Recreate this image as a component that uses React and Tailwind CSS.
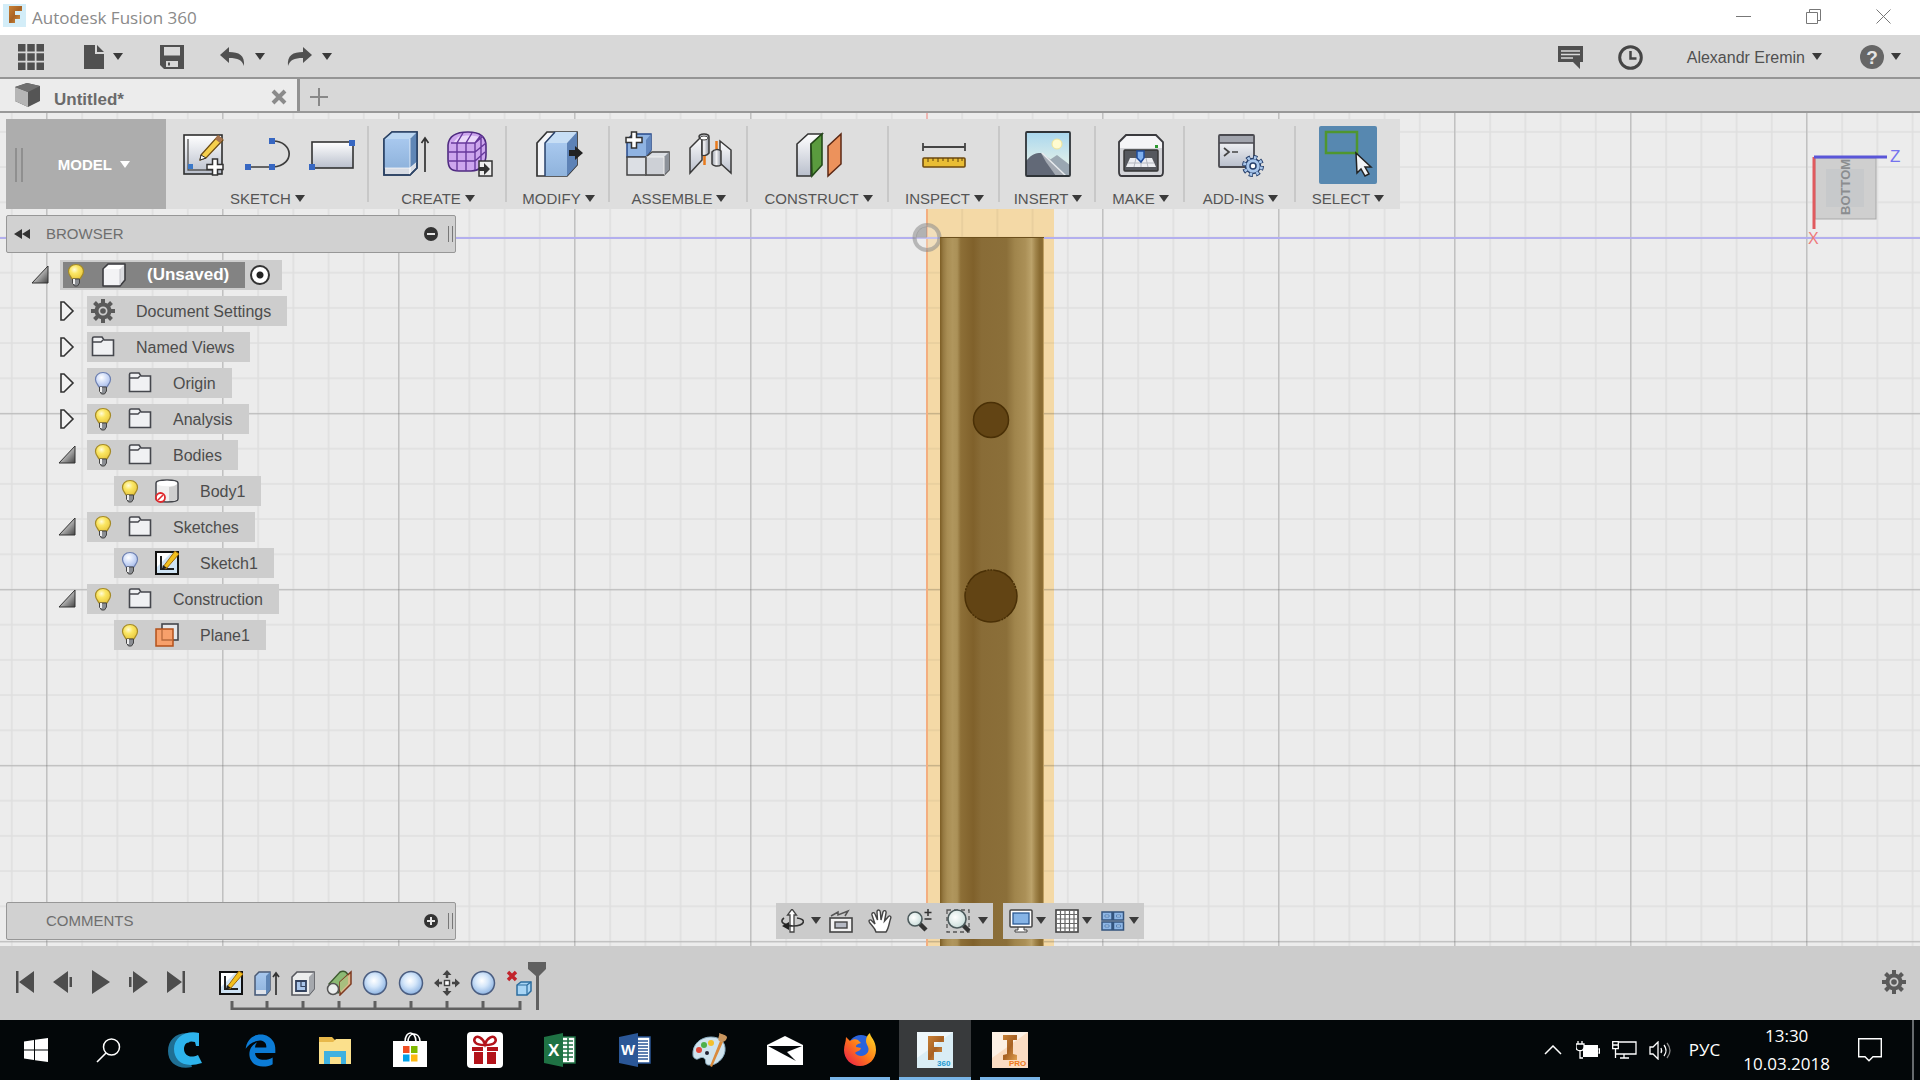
import React, { useState } from 'react'
import { FaEdgeLegacy } from 'react-icons/fa6'

const sans = "font-['Liberation_Sans',Arial,sans-serif]"

const Svg = ({ w = 24, h = w, box, className = "", children }) => (
  <svg width={w} height={h} viewBox={box || `0 0 ${w} ${h}`} fill="none" aria-hidden="true" className={`shrink-0 ${className}`}>
    {children}
  </svg>
)

const Caret = ({ className = "text-[#3a3a3a]" }) => (
  <Svg w={10} h={8} className={className}><path d="M0 0h10L5 7z" fill="currentColor" /></Svg>
)

// Gradients shared by all the icons
const Defs = () => (
  <svg width="0" height="0" className="absolute" aria-hidden="true">
    <defs>
      <linearGradient id="steel" x1="0" y1="0" x2="0" y2="1"><stop stopColor="#fff" /><stop offset="1" stopColor="#b9bfcc" /></linearGradient>
      <linearGradient id="blue" x1="0" y1="0" x2="0" y2="1"><stop stopColor="#a8c8ee" /><stop offset="1" stopColor="#8fb3dc" /></linearGradient>
      <linearGradient id="sky" x1="0" y1="0" x2="0" y2="1"><stop stopColor="#a9d7ee" /><stop offset="1" stopColor="#f4f8e8" /></linearGradient>
      <linearGradient id="metal" x1="0" y1="0" x2="1" y2="0"><stop stopColor="#9aa0aa" /><stop offset="0.5" stopColor="#f2f2f4" /><stop offset="1" stopColor="#8d939e" /></linearGradient>
      <radialGradient id="ball" cx="0.45" cy="0.4" r="0.6"><stop stopColor="#fff" /><stop offset="0.45" stopColor="#d5e7fa" /><stop offset="1" stopColor="#8eb4e2" /></radialGradient>
      <radialGradient id="bulbOn" cx="0.4" cy="0.35" r="0.7"><stop stopColor="#fffbd8" /><stop offset="0.4" stopColor="#fbe765" /><stop offset="1" stopColor="#e8c63c" /></radialGradient>
      <radialGradient id="bulbOff" cx="0.4" cy="0.35" r="0.7"><stop stopColor="#fff" /><stop offset="0.5" stopColor="#d2def8" /><stop offset="1" stopColor="#a9bdea" /></radialGradient>
      <radialGradient id="lens" cx="0.4" cy="0.4" r="0.7"><stop stopColor="#fff" /><stop offset="1" stopColor="#c3d9d6" /></radialGradient>
      <linearGradient id="corner" x1="0" y1="0" x2="1" y2="1"><stop offset="0.3" stopColor="#ddd" /><stop offset="1" stopColor="#444" /></linearGradient>
      <linearGradient id="bronze" x1="0" y1="0" x2="1" y2="1"><stop stopColor="#c98136" /><stop offset="0.5" stopColor="#a86224" /><stop offset="1" stopColor="#e0a050" /></linearGradient>
      <linearGradient id="fire" x1="0" y1="1" x2="1" y2="0"><stop stopColor="#e8124e" /><stop offset="0.5" stopColor="#ff7a1a" /><stop offset="1" stopColor="#ffe226" /></linearGradient>
    </defs>
  </svg>
)

/* ---------- ribbon icons, 48 x 48 ---------- */

const Plus = ({ x, y }) => (
  <path transform={`translate(${x} ${y})`} d="M-2.500-8h5v5.500h5.500v5h-5.500v5.500h-5v-5.500h-5.500v-5h5.500z" fill="#fff" stroke="#333" strokeWidth="1.500" />
)

const CreateSketchIcon = () => (
  <Svg w={48}>
    <rect x="4" y="4" width="38" height="39" fill="url(#steel)" stroke="#2e2e2e" strokeWidth="1.600" />
    <path d="M8 8v31h30" stroke="#555" strokeWidth="1.300" />
    <rect x="8" y="33" width="5" height="5" fill="#3a78c8" />
    <path d="M21 24l17-19 5 4-17 18-6 2z" fill="#f5cf4c" stroke="#6b4a12" strokeWidth="1.200" />
    <path d="M35 8l3-4 5 4-3 4z" fill="#a8744e" />
    <path d="M21 24l5 3-6 2z" fill="#fff" stroke="#333" />
    <Plus x={35} y={36} />
  </Svg>
)

const ArcIcon = () => (
  <Svg w={48}>
    <path d="M4 36h25c23-2 20-26 0-26" stroke="#3d3d3d" strokeWidth="1.700" />
    <path d="M1 33h6v6H1zM25 33h6v6h-6zM25 7h6v6h-6z" fill="#3767c2" />
  </Svg>
)

const RectangleIcon = () => (
  <Svg w={48}>
    <rect x="4" y="11" width="41" height="26" fill="url(#steel)" stroke="#333" strokeWidth="1.600" />
    <path d="M1 33h6v6H1zM41 9h6v6h-6z" fill="#3767c2" />
  </Svg>
)

const ExtrudeIcon = () => (
  <Svg w={48}>
    <path d="M2 8l8-7h25v36l-7 7H2z" fill="#d8dce4" stroke="#27364e" strokeWidth="1.600" />
    <path d="M2 8h26v29H2z" fill="url(#blue)" />
    <path d="M2 8l8-7h25l-7 7z" fill="#bcd7f2" />
    <path d="M28 8l7-7v30l-7 6z" fill="#5f86b6" />
    <path d="M2 37h26v7M28 8v36M28 37l7-6" stroke="#fff" strokeOpacity=".7" />
    <path d="M2 8l8-7h25v36l-7 7H2z" stroke="#2b4468" strokeWidth="1.600" />
    <path d="M43 41V8M39.500 12L43 7l3.500 5" stroke="#333" strokeWidth="1.700" />
  </Svg>
)

const FormIcon = () => (
  <Svg w={48}>
    <path d="M2 14C3 4 11 1 22 1s18 4 18 14v9c0 9-6 16-15 16H13C4 40 2 36 2 28z" fill="#cda6ee" stroke="#4f2b80" strokeWidth="1.600" />
    <path d="M12 6c7-2 15-2 21 0l-5 6H7z" fill="#ead7fa" />
    <path d="M2 21h27l11-9M2 30h27l10-9M5 12h24l8-7M11 40V12l6-10M20 40V12l6-10M29 39V12l6-8M35 36V7" stroke="#67399c" strokeWidth="1.400" />
    <rect x="33" y="30" width="13" height="15" fill="#eee" stroke="#333" strokeWidth="1.500" />
    <path d="M33 36h5v-4l6 6-6 6v-4h-5z" fill="#333" />
  </Svg>
)

const PressPullIcon = () => (
  <Svg w={48}>
    <path d="M2 12L12 1h30v33L32 45H2z" fill="#f4f5f8" stroke="#333" strokeWidth="1.700" />
    <path d="M10 12h22v33H10z" fill="url(#blue)" />
    <path d="M10 12L20 1h22L32 12z" fill="#c7def5" />
    <path d="M32 12L42 1v33L32 45z" fill="#5d82b6" />
    <path d="M10 45V12L20 1" stroke="#27406a" strokeWidth="1.500" />
    <path d="M34 19h6v-4l8 7-8 7v-4h-6z" fill="#222" />
  </Svg>
)

const AssembleIcon = () => (
  <Svg w={48}>
    <path d="M4 9l6-6h18v16l-5 7H4z" fill="#8fb3e2" stroke="#274a8a" strokeWidth="1.500" />
    <path d="M23 9l5-6v16l-5 7z" fill="#6286bd" />
    <path d="M4 26h19v18H4zM23 26l6-5h17v18l-5 5H23z" fill="#dcdfe4" stroke="#444" strokeWidth="1.500" />
    <path d="M41 26l5-5v18l-5 5z" fill="#8c9199" />
    <path d="M23 26h18v18H23z" fill="#cdd0d6" stroke="#eee" />
    <path d="M23 26v18h18" stroke="#444" strokeWidth="1.500" />
    <Plus x={11} y={9} />
  </Svg>
)

const JointIcon = () => (
  <Svg w={48}>
    <path d="M3 17l12-12v24L3 42z" fill="url(#steel)" stroke="#3a3a3a" strokeWidth="1.500" />
    <path d="M12 6c0-4 10-4 10 0v16c-2 3-6 3-7 2V9z" fill="url(#metal)" stroke="#3a3a3a" strokeWidth="1.500" />
    <ellipse cx="17" cy="7" rx="4" ry="2" fill="#fff" stroke="#444" />
    <path d="M17.500 25v9M29.500 10v11" stroke="#e87a1c" strokeWidth="2.500" />
    <path d="M33 10l11 9v23L33 32z" fill="url(#steel)" stroke="#3a3a3a" strokeWidth="1.500" />
    <path d="M25 21c2-3 7-3 9-1v14c-3 2-8 1-9-1z" fill="url(#metal)" stroke="#3a3a3a" strokeWidth="1.500" />
  </Svg>
)

const ConstructIcon = () => (
  <Svg w={48}>
    <path d="M2 13L13 3h14L16 13v32H2z" fill="url(#steel)" stroke="#333" strokeWidth="1.600" />
    <path d="M16 13L27 3v31L17 45z" fill="#5a9a3e" stroke="#244a18" strokeWidth="1.600" />
    <path d="M33 15L46 3v30L33 45z" fill="#ec925c" stroke="#5c2814" strokeWidth="1.500" />
  </Svg>
)

const InspectIcon = () => (
  <Svg w={48}>
    <path d="M2 16h42M2 12v8M44 12v8" stroke="#444" strokeWidth="1.800" />
    <rect x="2" y="27" width="42" height="9" rx="1" fill="#e9bd35" stroke="#6e4a10" strokeWidth="1.600" />
    <path d="M7 27v4M12 27v3M17 27v4M22 27v3M27 27v4M32 27v3M37 27v4M41 27v3" stroke="#5e400e" />
  </Svg>
)

const InsertIcon = () => (
  <Svg w={48}>
    <rect x="2" y="1" width="44" height="44" fill="url(#sky)" />
    <circle cx="33" cy="13" r="5" fill="#fffbd0" stroke="#eee59a" />
    <path d="M24 30l9-6 13 10v11H24z" fill="#9aa7b2" />
    <path d="M2 30c6-7 9-8 15-8l23 23H2z" fill="#626977" />
    <path d="M17 22l9 6 15 17H32L22 31z" fill="#a3a9b2" />
    <path d="M18 22l24 23" stroke="#e8ebee" strokeWidth="1.500" />
    <rect x="2" y="1" width="44" height="44" rx="1" stroke="#2f3438" strokeWidth="1.800" />
  </Svg>
)

const MakeIcon = () => (
  <Svg w={48}>
    <path d="M2 11l7-7h30l7 7v30c0 3-1 4-3 4H5c-2 0-3-1-3-4z" fill="#d3d4d8" stroke="#3a3a3e" strokeWidth="1.800" />
    <path d="M3 12l7-7h28l7 7v5H3z" fill="#f5f5f7" />
    <rect x="38" y="14" width="3" height="3" fill="#2d9a30" />
    <rect x="7" y="19" width="34" height="21" rx="1" fill="#55585e" stroke="#333" strokeWidth="1.400" />
    <path d="M13 27h22l4 9H9z" fill="#eceef2" />
    <path d="M11 32h26M19 27l-2 9M24 27v9M29 27l2 9" stroke="#b4b8c0" />
    <path d="M20 20h7v7l-3 4-4-4z" fill="#7fb0ee" stroke="#1f4c9c" strokeWidth="1.500" />
  </Svg>
)

const AddInsIcon = () => (
  <Svg w={48}>
    <rect x="2" y="4" width="35" height="32" rx="1" fill="url(#steel)" stroke="#4a4a50" strokeWidth="1.800" />
    <path d="M3 5h33v7H3z" fill="#a2a5ae" />
    <path d="M2 12h35" stroke="#4a4a50" strokeWidth="1.500" />
    <path d="M7 17l5 4-5 4M15 21h6" stroke="#444" strokeWidth="1.700" />
    <circle cx="36" cy="35" r="9" stroke="#27406c" strokeWidth="4" strokeDasharray="4 3.070" />
    <circle cx="36" cy="35" r="7.500" fill="#a9c7ec" stroke="#27406c" strokeWidth="1.500" />
    <circle cx="36" cy="35" r="8.500" stroke="#a9c7ec" strokeWidth="3" strokeDasharray="2.500 4.180" strokeDashoffset="-0.700" />
    <circle cx="36" cy="35" r="3" fill="#fff" stroke="#27406c" strokeWidth="1.500" />
  </Svg>
)

const SelectIcon = () => (
  <Svg w={58}>
    <rect x="7" y="6" width="31" height="21" stroke="#4f962f" strokeWidth="2.500" />
    <path d="M37 27l1 20 4-4 4 7 4-2-4-7h6z" fill="#f2f4f6" stroke="#222" strokeWidth="1.500" />
  </Svg>
)

/* ---------- small icons ---------- */

const Bulb = ({ on }) => (
  <Svg w={24}>
    <path d="M12 1.500c5 0 7.500 3.500 7.500 7 0 3-2 4.500-3.500 7.500H8c-1.500-3-3.500-4.500-3.500-7.500 0-3.500 2.500-7 7.500-7z" fill={on ? "url(#bulbOn)" : "url(#bulbOff)"} stroke={on ? "#a48a28" : "#6c7fb0"} strokeWidth="1.200" />
    <path d="M8.500 16h7v4l-2 3h-3l-2-3z" fill="#8a8d92" stroke="#444" />
    <path d="M10 16v5" stroke="#eee" strokeWidth="2" />
  </Svg>
)

const Folder = () => (
  <Svg w={24}>
    <path d="M1.500 3.500c0-1 .5-1.500 1.500-1.500h8l2 3h9.500v15.500h-21z" fill="#f0f1f3" stroke="#45474d" strokeWidth="1.600" />
    <path d="M2 7h8l2-2" stroke="#45474d" strokeWidth="1.400" />
  </Svg>
)

const Gear = () => (
  <Svg w={24}>
    <circle cx="12" cy="12" r="6.500" stroke="#5a5a5a" strokeWidth="4" />
    <path d="M12 0v4M12 20v4M0 12h4M20 12h4M3.500 3.500l3 3M17.500 17.500l3 3M3.500 20.500l3-3M17.500 6.500l3-3" stroke="#5a5a5a" strokeWidth="4" />
    <circle cx="12" cy="12" r="2.800" fill="#5a5a5a" />
  </Svg>
)

const Cube = () => (
  <Svg w={24}>
    <path d="M1 6l5-5h17v16l-5 6H1z" fill="#dcdde1" stroke="#3c3c40" strokeWidth="1.600" strokeLinejoin="round" />
    <path d="M2 6h16v16H2z" fill="#f3f3f5" />
    <path d="M2 6l5-4h15l-4 4z" fill="#fff" />
    <path d="M18 6v16" stroke="#c4c4ca" />
  </Svg>
)

const Cylinder = () => (
  <Svg w={24}>
    <path d="M1 4c0-4 22-4 22 0v16c0 4-22 4-22 0z" fill="#f0f0f0" stroke="#44464c" strokeWidth="1.500" />
    <path d="M14 8c5-1 6-1 8-3v15c-2 2-5 2-8 2z" fill="#cfcfcf" />
    <ellipse cx="12" cy="4.500" rx="10" ry="2.800" fill="#fff" />
    <circle cx="5.500" cy="18.500" r="4.500" fill="#fff" stroke="#e0282c" strokeWidth="1.800" />
    <path d="M3 21l5-5" stroke="#e0282c" strokeWidth="1.600" />
  </Svg>
)

const SketchIcon = () => (
  <Svg w={24}>
    <rect x="1" y="1" width="22" height="22" fill="#cfe3f4" stroke="#111" strokeWidth="2" />
    <path d="M2 2h14L2 16z" fill="#fff" />
    <path d="M6 5v13h13" stroke="#222" strokeWidth="2" />
    <path d="M8 16L20 0l4 3L11 18z" fill="#f3c01d" stroke="#a06a0c" />
    <path d="M7 18l1-4 4 3z" fill="#222" />
  </Svg>
)

const PlaneIcon = () => (
  <Svg w={24}>
    <rect x="7" y="1" width="16" height="16" fill="#e6e7ea" stroke="#44464c" strokeWidth="1.600" />
    <rect x="1" y="6" width="17" height="17" fill="#f7a06b" stroke="#b3501a" strokeWidth="1.500" />
    <path d="M7 7v10h10" stroke="#b86a3c" strokeWidth="1.300" />
  </Svg>
)

const Extrude = () => (
  <Svg w={26} h={26}>
    <path d="M1 6l4-4h11v18l-4 5H1z" fill="url(#blue)" stroke="#4a5a74" strokeWidth="1.500" />
    <path d="M12 6l4-4v18l-4 5z" fill="#5f86b6" />
    <path d="M2 20h10v4H2z" fill="#dfe3ea" />
    <path d="M22 25V4M19 7l3-4 3 4" stroke="#333" strokeWidth="1.700" />
  </Svg>
)

const Shell = () => (
  <Svg w={26}>
    <path d="M2 7l5-5h17v17l-5 6H2z" fill="#eceded" stroke="#55575d" strokeWidth="1.600" />
    <path d="M19 7l5-5v17l-5 6z" fill="#a5a8ad" />
    <path d="M6 11h10v10H6z" fill="#aac6ea" stroke="#33425e" strokeWidth="1.800" />
    <path d="M11 12v4.500h4" stroke="#33425e" strokeWidth="1.200" />
  </Svg>
)

const Split = () => (
  <Svg w={26}>
    <path d="M3 14L14 2c4-2 8 0 8 5L12 23z" fill="#8cba74" stroke="#3d5a30" strokeWidth="1.400" />
    <path d="M14 12L25 2v12L14 25z" fill="#dcb88a" stroke="#7e3a20" strokeWidth="1.500" />
    <path d="M14 12L22 5v9L14 22z" fill="#a8bf7e" />
    <circle cx="7" cy="19" r="5.500" fill="#eceeee" stroke="#555" strokeWidth="1.500" />
  </Svg>
)

const Ball = () => (
  <Svg w={26}>
    <circle cx="13" cy="13" r="11.500" fill="url(#ball)" stroke="#4a5d80" strokeWidth="1.500" />
  </Svg>
)

const Move = () => (
  <Svg w={26}>
    <path d="M13 0l4.500 5h-9zM13 26l4.500-5h-9zM0 13l5-4.500v9zM26 13l-5-4.500v9z" fill="#444" />
    <path d="M13 4v4M13 18v4M4 13h4M18 13h4" stroke="#444" strokeWidth="2.500" />
    <rect x="10.500" y="10.500" width="5" height="5" fill="#fff" stroke="#444" strokeWidth="1.400" />
  </Svg>
)

const Remove = () => (
  <Svg w={26}>
    <path d="M2 2l8 8M10 2l-8 8" stroke="#c2242c" strokeWidth="3.400" />
    <path d="M11 15l4-3h10v9l-4 4H11z" fill="#a8d5f5" stroke="#2b6c9e" strokeWidth="1.500" />
    <path d="M11 15h10v10M21 15l4-3" stroke="#2b6c9e" strokeWidth="1.200" />
  </Svg>
)

/* ---------- window header ---------- */

const TitleBar = () => (
  <header className="flex h-[35px] items-center justify-between bg-white pl-[3px]">
    <div className="flex items-center gap-1.5 pb-1">
      <Svg w={23}>
        <path d="M0 0h23v23H0z" fill="#d3edf8" />
        <path d="M6 2h13v5h-7v4h5v4h-5v4H6z" fill="url(#bronze)" />
      </Svg>
      <h1 className="pt-1 font-['Open_Sans','Noto_Sans',sans-serif] text-[17px] leading-6 text-[#8a8a8a]">Autodesk Fusion 360</h1>
    </div>
    <div className="flex pb-0.5 pr-0.5">
      {[["Minimize", "M0 7.500h15"], ["Restore", "M.5 3.500h11v11H.5zM3.500 3.500v-3h11v11h-3"], ["Close", "M.5.5l14 14M14.500.5l-14 14"]].map(([label, d]) => (
        <button key={label} aria-label={label} className="flex h-8 w-[70px] items-center justify-center">
          <Svg w={15}><path d={d} stroke="#777" /></Svg>
        </button>
      ))}
    </div>
  </header>
)

const TopBar = () => (
  <div className={`flex h-[44px] items-center justify-between border-b-2 border-[#959595] bg-[#d8d8d8] pl-[18px] pr-[19px] pt-0.5 ${sans}`}>
    <div className="flex items-center">
      <button aria-label="Data panel">
        <Svg w={26}><path d="M0 0h7.500v7.500H0zM9.250 0h7.500v7.500h-7.500zM18.500 0H26v7.500h-7.500zM0 9.250h7.500v7.500H0zM9.250 9.250h7.500v7.500h-7.500zM18.500 9.250H26v7.500h-7.500zM0 18.500h7.500V26H0zM9.250 18.500h7.500V26h-7.500zM18.500 18.500H26V26h-7.500z" fill="#505050" /></Svg>
      </button>
      <button aria-label="File" className="ml-10 flex items-center gap-[9px]">
        <Svg w={20} h={24}><path d="M0 0h11v9h9v15H0zM13 0l7 7h-7z" fill="#505050" /></Svg>
        <Caret />
      </button>
      <button aria-label="Save" className="ml-[37px]">
        <Svg w={24}><path d="M0 0h24v24H4l-4-4zM4 2v8.500h16V2zM6 16v6h12v-6zM8 17.500h2v3H8z" fillRule="evenodd" fill="#505050" /></Svg>
      </button>
      <button aria-label="Undo" className="ml-9 flex items-center gap-2.5">
        <Svg w={25} h={20}><path d="M0 8l9-8v5c10 0 16 3 15 14-2-6-6-8-15-8v5z" fill="#505050" /></Svg>
        <Caret />
      </button>
      <button aria-label="Redo" className="ml-[22px] flex items-center gap-2.5">
        <Svg w={25} h={20}><path d="M25 8l-9-8v5C6 5 0 8 1 19c2-6 6-8 15-8v5z" fill="#505050" /></Svg>
        <Caret />
      </button>
    </div>
    <div className="flex items-center">
      <button aria-label="Notifications">
        <Svg w={25} h={23}><path d="M0 0h25v16h-3v7l-7-7H0z" fill="#505050" /><path d="M3 5h19M3 8.500h19M3 12h12" stroke="#d8d8d8" strokeWidth="1.300" /></Svg>
      </button>
      <button aria-label="Job status" className="ml-[35px]">
        <Svg w={25}><circle cx="12.500" cy="12.500" r="10.800" stroke="#454545" strokeWidth="3" /><path d="M12.500 6v7.500h6" stroke="#454545" strokeWidth="2.500" /></Svg>
      </button>
      <button className="ml-11 flex items-center gap-[7px] text-[16px] leading-5 text-[#505050]">
        <span className="pt-0.5">Alexandr Eremin</span> <Caret />
      </button>
      <button aria-label="Help" className="ml-[38px] flex items-center gap-[7px]">
        <span className="flex size-6 items-center justify-center rounded-full bg-[#666] text-[19px] font-bold leading-none text-[#e4e4e4]">?</span>
        <Caret />
      </button>
    </div>
  </div>
)

const TabBar = () => (
  <div className={`flex h-[34px] border-b-2 border-[#999] bg-[#d8d8d8] ${sans}`}>
    <div className="flex w-[300px] items-center border-r-3 border-[#929292] bg-[#ececec] pl-[15px] pr-[10px]">
      <Svg w={25} h={24}>
        <path d="M0 4l12-4 13 3v15l-12 6L0 18z" fill="#555" />
        <path d="M0 4l13 5v15L0 18z" fill="#b5b5b5" />
        <path d="M0 4l12-4 13 3-12 6z" fill="#707070" />
      </Svg>
      <span className="ml-3.5 flex-1 pt-2.5 text-[17px] font-bold leading-5 text-[#6a6a6a]">Untitled*</span>
      <button aria-label="Close tab" className="pt-1"><Svg w={16}><path d="M2 2l12 12M14 2L2 14" stroke="#8b8b8b" strokeWidth="4" /></Svg></button>
    </div>
    <button aria-label="New tab" className="ml-2.5 pt-1"><Svg w={18}><path d="M9 0v18M0 9h18" stroke="#888" strokeWidth="2" /></Svg></button>
  </div>
)

/* ---------- ribbon ---------- */

const groups = [
  { label: "SKETCH", width: "w-[203px]", icons: [CreateSketchIcon, ArcIcon, RectangleIcon] },
  { label: "CREATE", width: "w-[138px]", icons: [ExtrudeIcon, FormIcon] },
  { label: "MODIFY", width: "w-[103px]", icons: [PressPullIcon] },
  { label: "ASSEMBLE", width: "w-[138px]", icons: [AssembleIcon, JointIcon] },
  { label: "CONSTRUCT", width: "w-[141px]", icons: [ConstructIcon] },
  { label: "INSPECT", width: "w-[111px]", icons: [InspectIcon] },
  { label: "INSERT", width: "w-[96px]", icons: [InsertIcon] },
  { label: "MAKE", width: "w-[89px]", icons: [MakeIcon] },
  { label: "ADD-INS", width: "w-[111px]", icons: [AddInsIcon] },
  { label: "SELECT", width: "w-[104px]", icons: [SelectIcon], active: true },
]

const Ribbon = () => (
  <div className="flex h-[90px] w-fit bg-[#dedede]">
    <button className="relative flex w-[160px] items-center justify-end gap-2 bg-[#adadad] pr-9 pt-0.5 text-[15px] font-bold text-white">
      <span className="absolute left-[9px] h-[34px] w-2 border-x-2 border-[#8f8f8f]" />
      MODEL <Caret className="text-white" />
    </button>
    {groups.map((g) => (
      <div key={g.label} className={`relative flex flex-col items-center pt-[7px] ${g.width}`}>
        <div className="flex h-[58px] items-center gap-4">
          {g.icons.map((Icon, i) => (
            <button key={i} aria-label={`${g.label} ${i + 1}`} className={g.active ? "rounded-xs bg-[#5788b0]" : ""}><Icon /></button>
          ))}
        </div>
        <button className="mt-[5px] flex items-center gap-1 text-[15px] leading-5 text-[#555]">
          {g.label} <Caret />
        </button>
        {!g.active && <span className="absolute right-0 top-[7px] h-[76px] w-0.5 bg-[#c8c8c8]" />}
      </div>
    ))}
  </div>
)

/* ---------- browser tree ---------- */

const items = [
  { name: "Document Settings", level: 1, icon: Gear, open: false },
  { name: "Named Views", level: 1, icon: Folder, open: false },
  { name: "Origin", level: 1, icon: Folder, open: false, bulb: "off" },
  { name: "Analysis", level: 1, icon: Folder, open: false, bulb: "on" },
  { name: "Bodies", level: 1, icon: Folder, open: true, bulb: "on" },
  { name: "Body1", level: 2, icon: Cylinder, bulb: "on" },
  { name: "Sketches", level: 1, icon: Folder, open: true, bulb: "on" },
  { name: "Sketch1", level: 2, icon: SketchIcon, bulb: "off" },
  { name: "Construction", level: 1, icon: Folder, open: true, bulb: "on" },
  { name: "Plane1", level: 2, icon: PlaneIcon, bulb: "on" },
]

const Arrow = ({ open }) => (
  <Svg w={18} h={20}>
    {open ? <path d="M17 1v17H1z" fill="url(#corner)" stroke="#333" /> : <path d="M3 1h3l9 9-9 9H3z" fill="#f2f2f2" stroke="#333" strokeWidth="1.600" />}
  </Svg>
)

const PanelHeader = ({ title, open, onToggle }) => (
  <div className="flex h-[38px] w-[450px] items-center rounded-xs border border-[#979797] bg-[#d1d1d1] pl-[7px] pr-0.5 text-[15px] text-[#6e6e6e]">
    <span className="w-8">
      {open && <Svg w={16} h={10}><path d="M8 0v10L0 5zM16 0v10L8 5z" fill="#333" /></Svg>}
    </span>
    <h2 className="flex-1">{title}</h2>
    <button aria-label={`Toggle ${title}`} onClick={onToggle}>
      <Svg w={14}><circle cx="7" cy="7" r="7" fill="#333" /><path d={open ? "M3 7h8" : "M3 7h8M7 3v8"} stroke="#e6e6e6" strokeWidth="2" /></Svg>
    </button>
    <span className="ml-2.5 h-4 w-[5px] border-x border-[#777]" />
  </div>
)

const Browser = () => {
  const [open, setOpen] = useState(true)

  return (
    <section className="mt-1.5 w-fit">
      <PanelHeader title="BROWSER" open={open} onToggle={() => setOpen(!open)} />
      {open && (
        <ul className="mt-[7px] space-y-1.5 text-[16px] text-[#4c4c4c]">
          <li className="flex items-center pl-[25px]">
            <button aria-label="Collapse"><Arrow open /></button>
            <div className="ml-[11px] flex h-[30px] items-center bg-[#cdcdcd] pl-[3px]">
              <div className="flex h-[26px] items-center bg-[#838383] pl-px pr-4 text-[17px] font-bold text-white">
                <Bulb on />
                <span className="ml-3.5 mr-[21px]"><Cube /></span>
                (Unsaved)
              </div>
              <label className="flex w-[37px] pl-[5px]">
                <input type="radio" defaultChecked aria-label="Activate component" className="size-5 appearance-none rounded-full border-2 border-[#333] bg-[radial-gradient(circle,#222_3px,#fff_4px)]" />
              </label>
            </div>
          </li>
          {items.map(({ name, level, icon: Icon, open, bulb }) => (
            <li key={name} className={`flex h-[30px] items-center ${level === 2 ? "pl-[108px]" : "pl-[52px]"}`}>
              {level === 1 && <button aria-label={`Expand ${name}`} className="mr-[11px]"><Arrow open={open} /></button>}
              <div className="flex h-[30px] items-center bg-[#cdcdcd] pl-1 pr-4">
                {bulb && <span className="mr-[13px]"><Bulb on={bulb === "on"} /></span>}
                <span className="mr-[21px]"><Icon /></span>
                <span className="pt-0.5">{name}</span>
              </div>
            </li>
          ))}
        </ul>
      )}
    </section>
  )
}

/* ---------- canvas ---------- */

const Scene = () => (
  <svg className="absolute inset-0 size-full" aria-hidden="true">
    <defs>
      <pattern id="minor" x="46" y="123.500" width="35.200" height="35.200" patternUnits="userSpaceOnUse">
        <path d="M0 1h35.200M1 0v35.200" stroke="#000" strokeOpacity=".055" strokeWidth="1.600" />
      </pattern>
      <pattern id="major" x="46" y="124" width="176" height="176" patternUnits="userSpaceOnUse">
        <path d="M0 .5h176M.5 0v176" stroke="#000" strokeOpacity=".14" />
        <path d="M0 1.500h176M1.500 0v176" stroke="#000" strokeOpacity=".06" />
      </pattern>
      <linearGradient id="tube">
        <stop stopColor="#7c5d24" />
        <stop offset=".03" stopColor="#957941" />
        <stop offset=".07" stopColor="#a88d53" />
        <stop offset=".12" stopColor="#b0965d" />
        <stop offset=".165" stopColor="#ab9158" />
        <stop offset=".2" stopColor="#8d6f37" />
        <stop offset=".32" stopColor="#80612b" />
        <stop offset=".4" stopColor="#896c37" />
        <stop offset=".64" stopColor="#8b6f39" />
        <stop offset=".72" stopColor="#a0854c" />
        <stop offset=".82" stopColor="#ab9057" />
        <stop offset=".88" stopColor="#bca36b" />
        <stop offset=".92" stopColor="#a0844a" />
        <stop offset=".96" stopColor="#8a6c32" />
        <stop offset=".985" stopColor="#8a6c32" />
        <stop offset="1" stopColor="#d8b777" />
      </linearGradient>
    </defs>
    <rect x="927" y="50" width="127" height="100%" fill="#f4d9a6" />
    <rect width="100%" height="100%" fill="url(#minor)" />
    <rect width="100%" height="100%" fill="url(#major)" />
    <path d="M927 0v50" stroke="#eeb6b2" strokeWidth="2" />
    <path d="M927 50v2000" stroke="#f3ae80" strokeWidth="2" />
    <rect y="124" width="100%" height="2" fill="#b3afee" />
    <circle cx="927" cy="124.500" r="12.500" stroke="#8a8a8a" strokeOpacity=".55" strokeWidth="4" fill="#eee" fillOpacity=".3" />
    <path d="M927 124.500v-11a11 11 0 0 0-11 11z" fill="#8a8a8a" fillOpacity=".6" />
    <rect x="940" y="124" width="104" height="100%" fill="url(#tube)" />
    <path d="M940 124.500h104" stroke="#6d501c" />
    <circle cx="991" cy="307" r="17.500" fill="#624414" stroke="#4a3006" strokeWidth="1.500" />
    <circle cx="991" cy="483" r="26" fill="#624414" stroke="#4a3006" strokeWidth="1.500" strokeDasharray="24 1 2 1 2 1" />
  </svg>
)

const ViewCube = () => (
  <Svg w={100} h={110} className={`absolute right-[14px] top-[30px] ${sans}`}>
    <rect x="9" y="15" width="61" height="61" fill="#cfcfcf" stroke="#a9a9a9" />
    <rect x="20" y="26" width="38" height="38" fill="#c7c9cb" />
    <text x="44" y="72" transform="rotate(-90 44 72)" fontSize="13" fontWeight="bold" fill="#8b8d90">BOTTOM</text>
    <path d="M8 14v72" stroke="#e05a5e" strokeWidth="3" />
    <path d="M8 14h73" stroke="#5a56d8" strokeWidth="3" />
    <text x="84" y="19" fontSize="17" fill="#7573ee">Z</text>
    <text x="2" y="101" fontSize="16" fill="#ee7a7c">X</text>
  </Svg>
)

const NavBar = () => (
  <nav className="flex items-center gap-2.5">
    <div className="flex h-9 items-center bg-[#cbcbcb] pl-1 pr-[5px]">
      <button aria-label="Orbit" className="flex items-center gap-[7px]">
        <Svg w={24}>
          <path d="M10 23V6H7.500L12 0l4.500 6H14v17z" fill="#fff" stroke="#444" strokeWidth="1.300" />
          <path d="M4 9c-6 4 2 8 9 8 12 0 14-7 4-8" stroke="#333" strokeWidth="1.600" />
          <path d="M9 13v8l-7-4z" fill="#222" />
        </Svg>
        <Caret />
      </button>
      <button aria-label="Look at" className="ml-2">
        <Svg w={24}>
          <rect x="1" y="9" width="22" height="14" fill="#f2f2f2" stroke="#444" strokeWidth="1.600" />
          <rect x="6" y="13" width="12" height="6" fill="#b6bac4" stroke="#444" strokeWidth="1.400" />
          <path d="M2 7l7-4v3l10-4-3 5" stroke="#555" strokeWidth="1.500" />
        </Svg>
      </button>
      <button aria-label="Pan" className="ml-[15px]">
        <Svg w={24}>
          <path d="M8 23c-1-4-4-6-6.500-9.500C0 11 2.500 10 4 12l3 3L4 6c-.6-2.500 2.300-3.200 3-1l2.500 6L9 3c0-2.700 3-2.700 3.300 0l.7 8 2-8c.7-2.300 3.500-1.500 3 1l-1.500 8L20 8c1-2 3.500-1 2.700 1.200C21 14 21 19 18 23z" fill="#fff" stroke="#444" strokeWidth="1.400" />
        </Svg>
      </button>
      <button aria-label="Zoom" className="ml-[15px]">
        <Svg w={25} h={24}>
          <path d="M13 15l6 6" stroke="#333" strokeWidth="4.500" />
          <circle cx="8" cy="10" r="7" fill="url(#lens)" stroke="#4c5a5c" strokeWidth="1.600" />
          <path d="M21 0v7M17.500 3.500h7M17.500 10h7" stroke="#333" strokeWidth="1.500" />
        </Svg>
      </button>
      <button aria-label="Fit" className="ml-[14px] flex items-center gap-[7px]">
        <Svg w={25} h={24}>
          <rect x="1" y="1" width="22" height="22" stroke="#555" strokeWidth="1.300" strokeDasharray="4 3" />
          <path d="M17 16l6 6" stroke="#333" strokeWidth="4.500" />
          <circle cx="11" cy="10" r="9" fill="url(#lens)" stroke="#4c5a5c" strokeWidth="1.600" />
        </Svg>
        <Caret />
      </button>
    </div>
    <div className="flex h-9 items-center gap-[9px] bg-[#cbcbcb] pl-1.5 pr-[5px]">
      <button aria-label="Display settings" className="flex items-center gap-[3px]">
        <Svg w={24}>
          <path d="M9 17h6v4h3v2H6v-2h3z" fill="#fff" stroke="#444" />
          <rect x="1" y="1" width="22" height="17" rx="1" fill="#fff" stroke="#444" strokeWidth="1.500" />
          <rect x="4" y="4" width="16" height="11" fill="#86b4e6" stroke="#2c5a94" strokeWidth="1.300" />
        </Svg>
        <Caret />
      </button>
      <button aria-label="Grid and snaps" className="flex items-center gap-[3px]">
        <Svg w={24}>
          <rect x="1" y="1" width="22" height="22" fill="#fff" stroke="#444" strokeWidth="1.600" />
          <path d="M5.500 1v22M10 1v22M14.500 1v22M19 1v22M1 5.500h22M1 10h22M1 14.500h22M1 19h22" stroke="#666" strokeWidth="1.200" />
        </Svg>
        <Caret />
      </button>
      <button aria-label="Viewports" className="flex items-center gap-1">
        <Svg w={24}>
          <path d="M1 3h10v8H1zM12.500 3h10v8h-10zM1 13h10v8H1zM12.500 13h10v8h-10z" fill="#8db6e6" stroke="#34547e" strokeWidth="1.500" />
          <path d="M4 6h4v2H4zM15.500 6h4v2h-4zM4 16h4v2H4zM15.500 16h4v2h-4z" fill="#c4dcf6" stroke="#5b83b4" />
        </Svg>
        <Caret />
      </button>
    </div>
  </nav>
)

/* ---------- timeline ---------- */

const controls = [
  ["Go to start", "M1 1h2.500v22H1zM19 1v22L4 12z"],
  ["Step back", "M15 1v22L0 12zM16.500 7H19v10h-2.500z"],
  ["Play", "M1 0l18 12L1 24z"],
  ["Step forward", "M0 7h2.500v10H0zM4 1l15 11L4 23z"],
  ["Go to end", "M0 1l15 11L0 23zM15.500 1H18v22h-2.500z"],
]

const features = [SketchIcon, Extrude, Shell, Split, Ball, Ball, Move, Ball, Remove]

const Timeline = () => (
  <section className="flex h-[74px] items-start justify-between bg-[#ccc] pl-[15px] pr-[14px]">
    <div className="flex items-start">
      <div className="mt-6 flex gap-[17px]">
        {controls.map(([label, d]) => (
          <button key={label} aria-label={label}><Svg w={21} h={24}><path d={d} fill="#4d4d4d" /></Svg></button>
        ))}
      </div>
      <div className="ml-[25px] mt-6">
        <ul className="flex">
          {features.map((Icon, i) => (
            <li key={i}><button aria-label={`Feature ${i + 1}`} className="flex h-[26px] w-9 items-center justify-center"><Icon /></button></li>
          ))}
        </ul>
        <Svg w={324} h={14}>
          <path d="M19 5v8h288V5M54 5v8M90 5v8M126 5v8M162 5v8M198 5v8M234 5v8M270 5v8" stroke="#606060" strokeWidth="3" />
        </Svg>
      </div>
      <button aria-label="History marker" className="-ml-[9px] mt-4">
        <Svg w={18} h={48}><path d="M0 0h18v7l-7 7v34H8V14L0 7z" fill="#606060" /></Svg>
      </button>
    </div>
    <button aria-label="Settings" className="mt-6"><Gear /></button>
  </section>
)

/* ---------- windows taskbar ---------- */

const Excel = () => (
  <Svg w={32} h={34}>
    <path d="M17 4h14v26H17z" fill="#fff" stroke="#1f7244" strokeWidth="1.500" />
    <path d="M19 8h10M19 12h10M19 16h10M19 20h10M19 24h10M24 5v23" stroke="#1f7244" strokeWidth="1.600" />
    <path d="M0 4l19-4v34L0 30z" fill="#1f7244" />
    <text x="4" y="23" fontSize="17" fontWeight="bold" fill="#fff">X</text>
  </Svg>
)

const Word = () => (
  <Svg w={32} h={34}>
    <path d="M17 4h14v26H17z" fill="#fff" stroke="#2b5797" strokeWidth="1.500" />
    <path d="M19 8h10M19 11h10M19 14h10M19 17h10M19 20h10M19 23h10M19 26h10" stroke="#2b5797" strokeWidth="1.300" />
    <path d="M0 4l19-4v34L0 30z" fill="#2b5797" />
    <text x="2" y="22" fontSize="15" fontWeight="bold" fill="#fff">W</text>
  </Svg>
)

const apps = [
  { name: "Cura", icon: (
    <Svg w={34} h={36}>
      <path d="M24 2C10-1 0 7 0 19s10 19 24 16l-3-9c-7 2-11-2-11-7s4-9 11-8z" fill="#1f6f94" />
      <path d="M31 1C17-2 6 6 6 17s9 20 28 14l-4-8c-8 4-14 0-14-6s5-9 11-7l1 4h3z" fill="#2db3ec" />
    </Svg>
  ) },
  { name: "Edge", icon: <FaEdgeLegacy size={33} color="#0c7cd6" /> },
  { name: "File Explorer", icon: (
    <Svg w={32} h={29}>
      <path d="M0 1h13l3 3h16v24H0z" fill="#e8b84a" />
      <path d="M0 6h14l3-3h15v25H0z" fill="#fbe08c" />
      <path d="M5 28V15h22v13h-5v-7H11v7z" fill="#3fb1e0" />
    </Svg>
  ) },
  { name: "Store", icon: (
    <Svg w={34} h={36}>
      <path d="M12 10C12-2 23-2 23 10M15 10c0-10 11-11 12-1" stroke="#fff" strokeWidth="1.600" />
      <path d="M0 9h34v26H0z" fill="#fff" />
      <path d="M10 14h6.500v7H10z" fill="#f04e23" /><path d="M18 14h6.500v7H18z" fill="#7fb900" />
      <path d="M10 22.500h6.500v7H10z" fill="#00a1e8" /><path d="M18 22.500h6.500v7H18z" fill="#fdb813" />
    </Svg>
  ) },
  { name: "Gifts", icon: (
    <Svg w={36}>
      <rect width="36" height="36" rx="4" fill="#fff" />
      <path d="M17 13C8 13 6 9 8 6s8 0 10 6c2-6 8-9 10-6s0 7-9 7z" stroke="#b3131a" strokeWidth="2.500" />
      <path d="M5 15h11v4H5zM20 15h11v4H20zM7 20h9v12H7zM20 20h9v12h-9z" fill="#b3131a" />
    </Svg>
  ) },
  { name: "Excel", icon: <Excel /> },
  { name: "Word", icon: <Word /> },
  { name: "Paint", icon: (
    <Svg w={36} h={34}>
      <path d="M1 22C0 11 9 4 19 4c9 0 15 5 14 14-1 8-9 15-17 14-4-1-1-5-4-7s-6 2-8 1-3-2-3-4z" fill="#cfe3ee" stroke="#8badc0" />
      <circle cx="7" cy="17" r="3" fill="#e0483a" /><circle cx="12" cy="12" r="3" fill="#4fb04a" /><circle cx="19" cy="10" r="3" fill="#f3c02c" />
      <circle cx="15" cy="20" r="2" fill="#223" />
      <path d="M28 8l3 1-11 25-2-1z" fill="#d98a3c" />
      <path d="M27 8c-2-3 1-5 0-8 4 2 6 1 8 4 0 3-3 5-5 5z" fill="#c9965f" />
    </Svg>
  ) },
  { name: "Mail", icon: (
    <Svg w={36} h={29}>
      <path d="M0 9L18 0l18 9v20H0z" fill="#fff" />
      <path d="M1 10h34L20 16l9 9-15-8z" fill="#05080a" />
    </Svg>
  ) },
  { name: "Firefox", running: true, icon: (
    <Svg w={34}>
      <circle cx="18" cy="15" r="13" fill="#2a63dc" />
      <path d="M3 4l4 4c3-2 6-2 8-1l3 3c-4 1-5 2-5 4l5 1c-1 4-5 3-6 5 3 4 10 4 13-1 2-5-2-7-2-11 0-3 1-6 4-8 0 4 6 7 6 17 0 9-7 16-16 16S1 26 1 17C1 12 3 9 3 4z" fill="url(#fire)" />
    </Svg>
  ) },
  { name: "Fusion 360", active: true, icon: (
    <Svg w={36}>
      <path d="M0 0h36v36H0z" fill="#d9edf5" /><path d="M0 0h36L0 26z" fill="#eef7fb" />
      <path d="M11 4h16v6H17v5h8v5h-8v8h-6z" fill="url(#bronze)" />
      <text x="20" y="34" fontSize="8" fontWeight="bold" fill="#1e9ad2">360</text>
    </Svg>
  ) },
  { name: "Inventor", running: true, icon: (
    <Svg w={36}>
      <path d="M0 0h36v36H0z" fill="#fbdcc2" /><path d="M0 0h36L0 26z" fill="#fdf0e4" />
      <path d="M11 3h14v5h-4v14l4 1v5H11v-5l4-1V8h-4z" fill="url(#bronze)" />
      <text x="17" y="34" fontSize="8" fontWeight="bold" fill="#ee7a1c">PRO</text>
    </Svg>
  ) },
]

const Taskbar = () => (
  <footer className={`flex h-[60px] items-stretch justify-between bg-[#030709] text-white ${sans}`}>
    <div className="flex">
      <button aria-label="Start" className="flex w-[72px] items-center justify-center">
        <Svg w={24}><path d="M0 3.500l10-1.500v9.500H0zM11 1.800L24 0v11.500H11zM0 12.500h10V22L0 20.500zM11 12.500h13V24l-13-1.800z" fill="#fff" /></Svg>
      </button>
      <button aria-label="Search" className="flex w-[72px] items-center justify-center">
        <Svg w={25}><circle cx="15.500" cy="9" r="8" stroke="#fff" strokeWidth="1.500" /><path d="M10 15L1 24" stroke="#fff" strokeWidth="1.600" /></Svg>
      </button>
      <div className="ml-[5px] flex gap-[3px]">
        {apps.map((app) => (
          <button key={app.name} aria-label={app.name} className={`relative flex w-[72px] items-center justify-center ${app.active ? "bg-[#383a3c]" : ""}`}>
            {app.icon}
            {app.active && <span className="absolute inset-x-0 bottom-0 h-[3px] bg-[#78b4e6]" />}
            {app.running && <span className="absolute inset-x-1.5 bottom-0 h-[3px] bg-[#78b4e6]" />}
          </button>
        ))}
      </div>
    </div>
    <div className="flex items-center font-['Open_Sans','Noto_Sans',sans-serif] text-[17px]">
      <button aria-label="Show hidden icons"><Svg w={18} h={10}><path d="M1 9l8-8 8 8" stroke="#fff" strokeWidth="1.500" /></Svg></button>
      <Svg w={24} h={18} className="ml-3.5">
        <path d="M7 4h15v12H7z" fill="#fff" /><path d="M22.500 8h1v4h-1" stroke="#fff" strokeWidth="1.500" />
        <path d="M0 3h8v3c0 5-8 5-8 0zM2 0v3M6 0v3M4 9v8h3" fill="#030709" stroke="#fff" strokeWidth="1.300" />
      </Svg>
      <Svg w={25} h={18} className="ml-3">
        <path d="M6 1h18v12H3M12 13v4M8 17h9" stroke="#fff" strokeWidth="1.300" />
        <path d="M.7.7h5.600v7H.7zM.7 4h5M3.500 8v9" fill="#030709" stroke="#fff" strokeWidth="1.300" />
      </Svg>
      <Svg w={24} h={19} className="ml-3">
        <path d="M1 6h3l5-5v17l-5-5H1z" stroke="#fff" strokeWidth="1.300" />
        <path d="M12 7c1 2 1 3 0 5M15 4c3 4 3 7 0 11" stroke="#fff" strokeWidth="1.300" /><path d="M18 2c4 5 4 10 0 15" stroke="#888" strokeWidth="1.300" />
      </Svg>
      <button className="ml-4" aria-label="Keyboard layout">РУС</button>
      <div className="ml-[23px] text-center leading-7">
        <p>13:30</p>
        <p>10.03.2018</p>
      </div>
      <button aria-label="Action center" className="ml-7"><Svg w={24}><path d="M.7.7h22.600v18H15l-4 4-4-4H.7z" stroke="#fff" strokeWidth="1.400" /></Svg></button>
      <span className="ml-[30px] mr-1.5 h-full w-0.5 bg-[#666a6d]" />
    </div>
  </footer>
)

const App = () => {
  const [comments, setComments] = useState(false)

  return (
    <div className="flex min-h-screen flex-col">
      <Defs />
      <TitleBar />
      <TopBar />
      <TabBar />
      <main className={`relative flex flex-1 flex-col bg-[#ececec] ${sans}`}>
        <Scene />
        <ViewCube />
        <div className="relative flex flex-1 flex-col px-1.5 pb-1.5 pt-1.5">
          <Ribbon />
          <Browser />
          <div className="mt-auto grid grid-cols-[1fr_auto_1fr] items-center">
            <PanelHeader title="COMMENTS" open={comments} onToggle={() => setComments(!comments)} />
            <NavBar />
          </div>
        </div>
      </main>
      <Timeline />
      <Taskbar />
    </div>
  )
}

export default App
